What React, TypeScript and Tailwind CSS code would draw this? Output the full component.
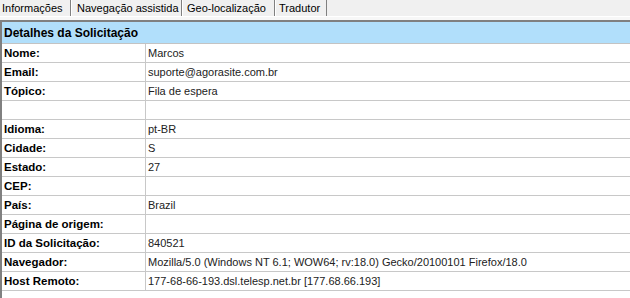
import React from "react";

const rows: [string, string][] = [
  ["Nome:", "Marcos"],
  ["Email:", "suporte@agorasite.com.br"],
  ["Tópico:", "Fila de espera"],
  ["", ""],
  ["Idioma:", "pt-BR"],
  ["Cidade:", "S"],
  ["Estado:", "27"],
  ["CEP:", ""],
  ["País:", "Brazil"],
  ["Página de origem:", ""],
  ["ID da Solicitação:", "840521"],
  ["Navegador:", "Mozilla/5.0 (Windows NT 6.1; WOW64; rv:18.0) Gecko/20100101 Firefox/18.0"],
  ["Host Remoto:", "177-68-66-193.dsl.telesp.net.br [177.68.66.193]"],
];

export default function App() {
  return (
    <div className="w-[630px] h-[298px] bg-white overflow-hidden font-['Liberation_Sans',Arial,sans-serif] flex flex-col">
      <div className="flex h-[17px] bg-[#f0f0f0] border-b border-white text-[11px] leading-[16px] text-black shrink-0">
        <div className="w-[71px] pl-[2px] border-r border-[#808080]">Informações</div>
        <div className="w-[111px] pl-[5px] border-l border-white border-r border-r-[#808080]">Navegação assistida</div>
        <div className="w-[93px] pl-[4px] border-l border-white border-r border-r-[#808080]">Geo-localização</div>
        <div className="w-[52px] pl-[3px] border-l border-white border-r border-r-[#808080]">Tradutor</div>
        <div className="flex-1" />
      </div>
      <div className="h-[3px] bg-[#f7f7f7] shrink-0" />
      <div className="flex-1 border-l-2 border-t-2 border-[#808080] bg-white">
        <div className="h-[22px] bg-[#b1dffb] border-b border-[#c3c3c3] pl-[2px] pt-[1px] text-[12px] font-bold leading-[20px] text-black">
          Detalhes da Solicitação
        </div>
        {rows.map(([label, value], i) => (
          <div key={i} className="flex h-[19px] border-b border-[#c8c8c8]">
            <div className="w-[144px] pl-[2px] pt-[1px] border-r border-[#c8c8c8] text-[11.5px] font-bold leading-[17px] text-black shrink-0">
              {label}
            </div>
            <div className="pl-[2px] pt-[1px] text-[11px] leading-[17px] text-[#222] whitespace-nowrap">{value}</div>
          </div>
        ))}
      </div>
    </div>
  );
}
